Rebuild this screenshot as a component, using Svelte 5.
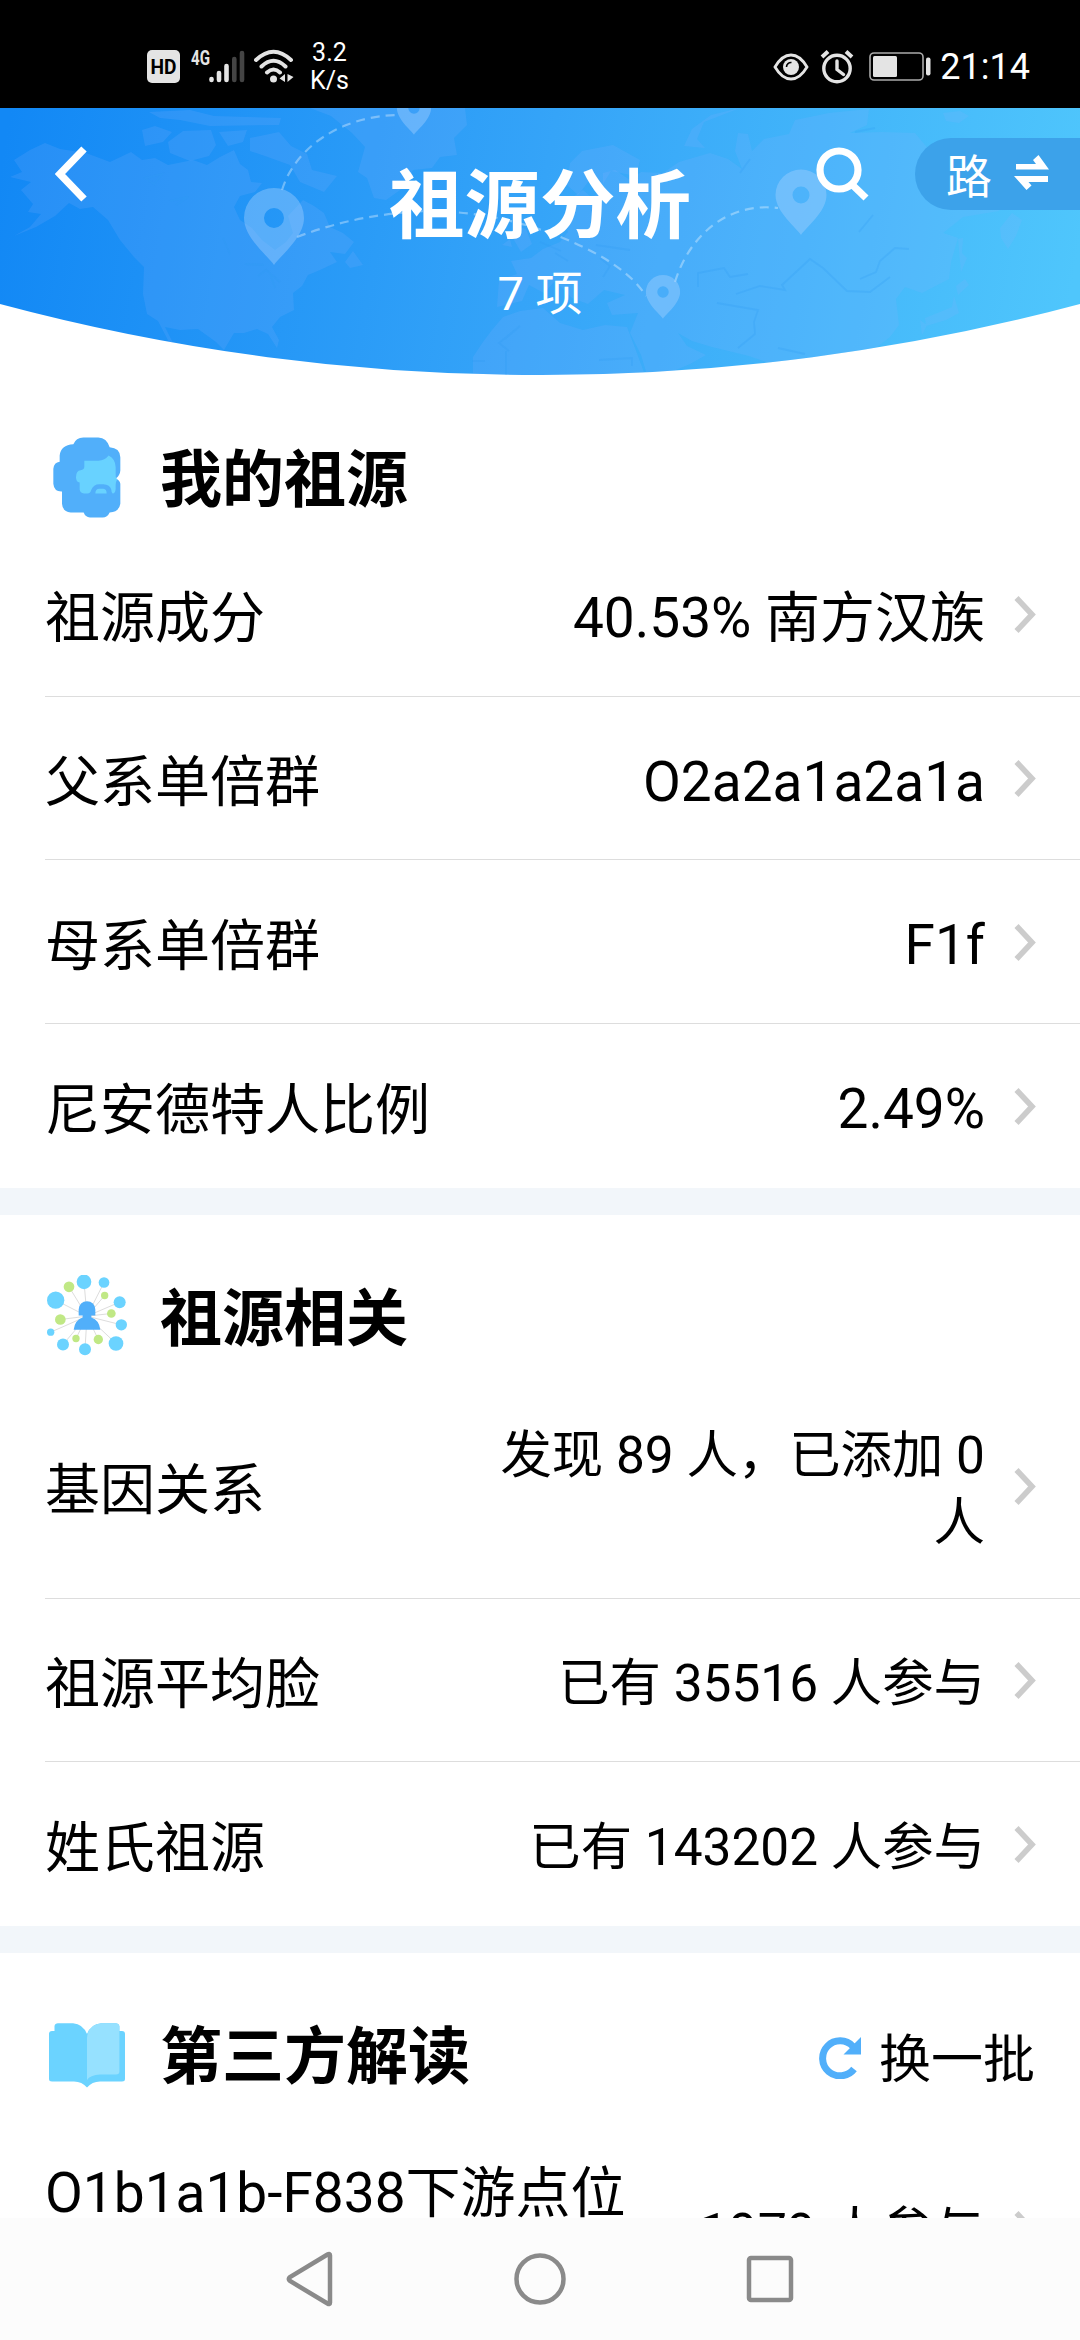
<script lang="ts">
	type Row = { label: string; value: string; size?: 'medium' | 'large'; tall?: boolean };
	type Section = { title: string; icon: 'ancestor' | 'network' | 'book'; refresh?: boolean; rows: Row[] };

	const sections: Section[] = [
		{
			title: '我的祖源',
			icon: 'ancestor',
			rows: [
				{ label: '祖源成分', value: '40.53% 南方汉族', size: 'large' },
				{ label: '父系单倍群', value: 'O2a2a1a2a1a', size: 'large' },
				{ label: '母系单倍群', value: 'F1f', size: 'large' },
				{ label: '尼安德特人比例', value: '2.49%', size: 'large' }
			]
		},
		{
			title: '祖源相关',
			icon: 'network',
			rows: [
				{ label: '基因关系', value: '发现 89 人，已添加 0 人' },
				{ label: '祖源平均脸', value: '已有 35516 人参与' },
				{ label: '姓氏祖源', value: '已有 143202 人参与' }
			]
		},
		{
			title: '第三方解读',
			icon: 'book',
			refresh: true,
			rows: [{ label: 'O1b1a1b-F838下游点位', value: '1979 人参与', size: 'medium', tall: true }]
		}
	];

	// x, y, scale
	const pins = [
		[274, 110, 1],
		[414, 0, 0.57],
		[801, 87, 0.85],
		[663, 184, 0.57]
	];

	// x, y, radius, around the person at 171,170
	const blueDots = [
		[162, 67, 22], [222, 69, 16], [77, 122, 26], [269, 128, 18], [274, 196, 17],
		[62, 218, 11], [99, 255, 18], [165, 269, 18], [258, 252, 22]
	];
	const greenDots = [
		[117, 82, 16], [224, 108, 11], [244, 162, 13], [91, 180, 16], [138, 237, 11], [205, 240, 14]
	];
</script>

<div class="screen">
	<div class="status">
		<div class="status-left">
			<svg class="hd" width="33" height="33" viewBox="0 0 33 33">
				<rect width="33" height="33" rx="5" fill="#e4e4e4" />
				<text x="16.5" y="24" text-anchor="middle" font-size="20" font-weight="700" textLength="26" lengthAdjust="spacingAndGlyphs">HD</text>
			</svg>
			<svg class="signal" width="54" height="35" viewBox="0 0 54 35">
				<text x="0" y="16" font-size="20" font-weight="700" fill="#e4e4e4" textLength="19" lengthAdjust="spacingAndGlyphs">4G</text>
				<g stroke-width="4.6" stroke-linecap="round" stroke="#e4e4e4">
					<path d="M20.5 30v1M28 24v7M35.5 17v14" />
					<path d="M43.3 10v21M51 4v27" stroke="#444" />
				</g>
			</svg>
			<svg class="wifi" width="40" height="35" viewBox="0 0 40 35">
				<g fill="none" stroke="#e4e4e4" stroke-width="4" stroke-linecap="round">
					<path d="M2 11Q19.5 -5.5 37 11M7.5 17.5Q19.5 6 31.500 17.500M13 23.500Q19.500 17.500 26 23.500" />
				</g>
				<circle cx="19.5" cy="30" r="3.5" fill="#e4e4e4" />
				<path d="M25.500 29.500 31 25v8zM33.500 25v8l6-5z" fill="#e4e4e4" />
			</svg>
			<div class="speed">3.2<br />K/s</div>
		</div>
		<div class="status-right">
			<svg width="36" height="28" viewBox="0 0 36 28">
				<path d="M2 14Q9 2 18 2T34 14Q27 26 18 26T2 14Z" fill="none" stroke="#e4e4e4" stroke-width="2.8" />
				<circle cx="18" cy="14" r="8" fill="#e4e4e4" />
				<path d="M13.5 14a4.500 4.500 0 0 1 5-4.500" fill="none" stroke="#000" stroke-width="1.6" />
			</svg>
			<svg class="alarm" width="34" height="34" viewBox="0 0 34 34">
				<g fill="none" stroke="#e4e4e4" stroke-width="3.4">
					<circle cx="17" cy="18.5" r="13.2" />
					<path d="M17 11v8.500l6.500 5" stroke-linecap="round" />
					<path d="M2 7l6-5.500M32 7l-6-5.500" stroke-width="4" />
				</g>
			</svg>
			<svg class="battery" width="62" height="29" viewBox="0 0 62 29">
				<rect x="1" y="1" width="53" height="27" rx="4" fill="none" stroke="#aaa" stroke-width="1.6" />
				<rect x="4" y="4" width="24" height="21" rx="1.5" fill="#e4e4e4" />
				<rect x="57" y="5.5" width="4.5" height="18" rx="2" fill="#e4e4e4" />
			</svg>
			<span class="time">21:14</span>
		</div>
	</div>

	<header>
		<svg class="map" width="1080" height="267" viewBox="0 0 1080 267">
			<defs>
				<linearGradient id="sky" gradientUnits="userSpaceOnUse" x1="0" y1="60" x2="1060" y2="250">
					<stop offset="0" stop-color="#1288f5" />
					<stop offset="0.5" stop-color="#35a4f8" />
					<stop offset="1" stop-color="#4fc6fc" />
				</linearGradient>
				<clipPath id="dome"><path d="M0 0H1080V196A2089 2089 0 0 1 0 196Z" /></clipPath>
			</defs>
			<g clip-path="url(#dome)">
				<rect width="1080" height="267" fill="url(#sky)" />
				<g fill="#8ab4ff" fill-opacity="0.17">
					<path d="M10 69 22 64 14 52 30 42 45 35 60 41 86 45 110 54 131 44 142 52 155 50 168 57 193 52 207 57 220 49 234 42 240 56 248 62 251 74 262 75 255 84 240 88 234 99 240 112 252 120 262 132 275 142 286 134 293 125 288 108 303 92 314 98 324 105 330 119 343 125 354 134 345 146 330 144 337 154 320 162 308 167 302 178 293 185 294 202 280 209 272 219 279 232 277 240 268 226 257 221 244 225 234 225 224 242 216 234 198 221 180 222 165 219 173 235 184 244 170 236 158 213 147 206 143 186 144 159 134 149 120 132 108 112 93 99 80 101 69 95 55 108 36 119 14 128 30 119 41 106 28 104 33 96 21 82 31 74Z" />
					<path d="M142 22 155 18 172 24 163 34 145 38ZM149 4 190 2 214 8 281 10 279 17 210 18 180 12 160 10ZM168 34 183 23 211 22 216 37 209 48 190 53 170 45ZM219 24 247 22 243 34 228 38ZM250 30 279 24 291 38 307 46 312 62 337 68 324 84 300 74 290 57 265 48 250 43ZM345 154 353 143 363 157 350 160Z" />
					<path d="M310 0H465L467 17 454 30 457 47 440 49 432 60 413 62 403 80 386 92 374 90 367 70 358 64 365 39 352 25 331 8Z" />
					<path d="M503 209 520 203 543 200 560 215 583 222 605 217 627 219 635 240 645 267H473L473 249 483 234 492 222Z" />
					<path d="M497 199 499 172 517 166 511 153 531 150 543 141 560 134 568 124 563 111 570 91 583 82 592 90 603 80 603 65 615 62 630 72 641 64 663 65 679 54 710 45 728 51 742 61 735 43 738 25 748 26 752 43 764 31 789 26 795 12 829 5 869 1 867 17 850 25 882 24 915 25 930 43 960 54 998 70 999 103 963 109 943 125 958 130 951 154 949 171 922 185 905 179 896 191 899 217 890 229 877 239 857 246 827 251 781 259 749 248 712 239 692 233 678 225 687 238 706 247 690 256 664 267H647L641 247 630 225 638 205 612 207 607 195 625 187 604 182 588 196 572 190 555 173 544 185 529 177 522 193Z" />
					<path d="M570 55 582 43 613 37 640 52 636 68 611 63 600 81 592 69 578 87 567 77ZM684 38 692 21 711 7 740 0 704 14 697 31 705 40ZM514 132 519 119 526 121 532 136 521 144ZM502 137 510 131 512 139ZM1000 120 1012 105 1022 112 1016 128 1008 141 1001 130ZM943 5 960 3 969 8 959 15 946 13ZM958 131 963 130 962 145 967 150 961 164ZM956 178 965 171 969 177 958 187ZM954 188 959 205 946 212 926 218 925 210 940 204 952 199ZM920 212 927 217 922 227Z" />
				</g>
				<g fill="none" stroke="#2c9cf3" stroke-opacity="0.24" stroke-width="1.8">
					<path d="M145 70 162 66 154 76ZM170 93 188 89 176 97M223 130 230 146M245 156 264 157M258 168 266 162 280 174M270 165 275 180M505 231 520 218 499 235 509 243M506 243V267M472 253H485M555 145 568 153M540 134 561 143M596 137 630 142M600 150 610 158 603 169M698 179V165L724 160 730 169 748 166M736 186 760 178 785 182 782 177 810 151 823 160 847 183 870 184 890 169M860 171 876 164 880 153 895 140 909 141M599 252 632 250 632 258M738 240 755 226 754 214 758 202 717 195M778 240 805 246M825 248 822 258M740 65 750 51M875 20 855 24M859 124 873 107" />
				</g>
				<g fill="none" stroke="#fff" stroke-opacity="0.34" stroke-width="2.2" stroke-dasharray="9 6">
					<path d="M282 82C295 40 340 8 398 7M297 129Q360 105 430 103 500 104 563 130T646 188M675 174C690 125 730 94 778 100" />
				</g>
				{#each pins as [x, y, scale]}
					<g transform="translate({x} {y}) scale({scale})">
						<path d="M0 47C-5 39-30 20-30 0A30 30 0 1 1 30 0C30 20 5 39 0 47ZM0-10A10 10 0 1 0 0 10 10 10 0 1 0 0-10Z" fill="#a8d2ff" fill-opacity="0.4" fill-rule="evenodd" />
					</g>
				{/each}
			</g>
		</svg>

		<svg class="back" width="32" height="56" viewBox="0 0 32 56">
			<path d="M29 3 5 28l24 25" fill="none" stroke="#fff" stroke-width="7.5" />
		</svg>
		<div class="heading">
			<h1>祖源分析</h1>
			<p>7 项</p>
		</div>
		<div class="tools">
			<svg width="54" height="54" viewBox="0 0 54 54">
				<g fill="none" stroke="#fff" stroke-width="7.2">
					<circle cx="23" cy="23" r="19" />
					<path d="M36.500 38 50 51" />
				</g>
			</svg>
			<button class="switch">
				<span>路</span>
				<svg width="36" height="36" viewBox="0 0 36 36" fill="#fff">
					<path d="M2 9h20l-3-4 5.500-5L35 14.500H2zM34 21v6H14.500l3 3.500-5 4.500L0 21z" />
				</svg>
			</button>
		</div>
	</header>

	<main>
		{#each sections as section}
			<section>
				<div class="section-title">
					<svg class="section-icon" width="83" height="83" viewBox={section.icon === 'ancestor' ? '45 49.5 249 249' : section.icon === 'network' ? '45 46.5 249 249' : '0 0 83 83'}>
						{#if section.icon === 'ancestor'}
							<path d="M160 51H205Q230 52 239 80 270 82 271 110V150Q270 165 257 174 270 180 271 190V250Q268 274 239 276 232 291 218 291H180Q166 290 161 276H122Q97 273 96 250V213Q72 214 70 190V145Q72 126 89 124V105Q92 73 130 71 138 52 160 51Z" fill="#51affa" />
							<path d="M163 121H205Q225 119 236 105 256 115 257 140V160Q255 168 262 178 256 181 257 205 256 219 248 219 244 218 244 208 240 192 220 191H208Q190 191 184 208 182 219 172 219H162Q150 218 149 207V186Q138 184 138 170 138 150 152 149 163 148 163 138ZM196 219Q196 205 208 205H220Q230 206 230 219Z" fill="#68d2ff" />
						{:else if section.icon === 'network'}
							<g stroke="#ddd" stroke-width="3">
								{#each [...blueDots, ...greenDots] as [x, y]}
									<line x1="171" y1="170" x2={x} y2={y} />
								{/each}
							</g>
							<g fill="#6bd3ff">
								{#each blueDots as [x, y, r]}
									<circle cx={x} cy={y} {r} />
								{/each}
							</g>
							<g fill="#c0e885">
								{#each greenDots as [x, y, r]}
									<circle cx={x} cy={y} {r} />
								{/each}
							</g>
							<path d="M146 168V150A25 25 0 0 1 196 150V168H184V174Q208 182 211 211H131Q134 182 158 174V168Z" fill="#51affa" />
						{:else}
							<path d="M9.500 17V12Q10 9.200 13 9.200H28Q38 10 42 20 46 10 56 9.200H71Q74 9.500 74.400 12V17H77Q80 17 80 20V65Q80 67.500 77 67.500H55Q47 67.500 42 73.500 37 67.500 29 67.500H7Q4 67.500 4 65V20Q4 17 7 17Z" fill="#6bd3ff" />
							<path d="M42 66V24Q43 10 57 9.200H71Q74 9.500 74.400 12V58Q74 60.500 71 60.500H55Q45 61 42 66Z" fill="#96e1ff" />
						{/if}
					</svg>
					<h2>{section.title}</h2>
					{#if section.refresh}
						<button class="refresh">
							<svg width="42" height="42" viewBox="0 0 42 42">
								<path d="M34 9.500A17.500 17.500 0 1 0 35 32" fill="none" stroke="#51affa" stroke-width="7" />
								<path d="M42 0V17.500H24.500Z" fill="#51affa" />
							</svg>
							<span>换一批</span>
						</button>
					{/if}
				</div>
				{#each section.rows as row}
					<div class="row" class:tall={row.tall}>
						<span class="label">{row.label}</span>
						<span class="value {row.size ?? ''}">{row.value}</span>
						<svg class="arrow" width="22" height="37" viewBox="0 0 22 37">
							<path d="M2.500 2 18 18.500 2.500 35" fill="none" stroke="#ccc" stroke-width="5.6" />
						</svg>
					</div>
				{/each}
			</section>
		{/each}
	</main>

	<nav>
		<svg width="52" height="56" viewBox="0 0 52 56">
			<path d="M46 4.500V51.500Q46 54 43.500 52.500L6 30Q3.500 28 6 26L43.500 3.500Q46 2 46 4.500Z" />
		</svg>
		<svg width="52" height="56" viewBox="0 0 52 56"><circle cx="26" cy="28" r="23.5" /></svg>
		<svg width="52" height="56" viewBox="0 0 52 56"><rect x="5" y="7" width="42" height="42" rx="2" /></svg>
	</nav>
</div>

<style>
	:global(body) {
		background: #fff;
	}

	.screen {
		width: 1080px;
		height: 2340px;
		display: flex;
		flex-direction: column;
		overflow: hidden;
		background: #fff;
		color: #000;
		font-family: Roboto, 'Noto Sans CJK SC', sans-serif;
	}

	svg {
		display: block;
		flex: none;
	}

	.signal {
		overflow: visible;
	}

	.status {
		height: 108px;
		flex: none;
		box-sizing: border-box;
		display: flex;
		justify-content: space-between;
		align-items: center;
		padding: 25px 50px 0 147px;
		background: #000;
		color: #fff;
	}

	.status-left,
	.status-right {
		display: flex;
		align-items: center;
	}

	.signal {
		margin-left: 11px;
	}

	.wifi {
		margin-left: 9px;
	}

	.speed {
		margin-left: 16px;
		font-size: 25px;
		line-height: 28px;
		text-align: center;
	}

	.alarm {
		margin-left: 11px;
	}

	.battery {
		margin-left: 15px;
	}

	.time {
		margin-left: 9px;
		font-size: 36px;
		line-height: 40px;
	}

	header {
		position: relative;
		flex: none;
		height: 267px;
		display: grid;
		grid-template-columns: 1fr auto 1fr;
		align-items: start;
		color: #fff;
	}

	.map {
		position: absolute;
		top: 0;
		left: 0;
	}

	.back,
	.heading,
	.tools {
		position: relative;
	}

	.back {
		margin: 38px 0 0 55px;
	}

	.heading {
		text-align: center;
	}

	h1 {
		margin: 48px 0 0;
		font-size: 75.5px;
		line-height: 100px;
		font-weight: 700;
	}

	p {
		margin: 8px 0 0;
		font-size: 47px;
		line-height: 60px;
	}

	button {
		border: none;
		background: none;
		padding: 0;
		font: inherit;
		color: inherit;
	}

	.tools {
		display: flex;
		align-items: center;
		justify-content: flex-end;
		gap: 45px;
		margin-top: 30px;
	}

	.switch {
		display: flex;
		align-items: center;
		gap: 22px;
		box-sizing: border-box;
		width: 165px;
		height: 72px;
		padding: 0 0 2px 31px;
		border-radius: 36px 0 0 36px;
		background: #3ca2ea;
		font-size: 46px;
	}

	main {
		flex: 1;
		min-height: 0;
		overflow: hidden;
	}

	section + section {
		border-top: 27px solid #f2f6fa;
	}

	.section-title {
		display: flex;
		align-items: center;
		box-sizing: border-box;
		height: 159px;
		padding: 45px 45px 0 45px;
	}

	section:first-child .section-title {
		height: 158px;
		padding-top: 48px;
	}

	h2 {
		margin: 0 auto 0 32px;
		padding-top: 6px;
		font-size: 62px;
		line-height: 80px;
		font-weight: 700;
	}

	.refresh {
		display: flex;
		align-items: center;
		gap: 18px;
		padding-top: 6px;
		font-size: 52px;
		line-height: 70px;
	}

	.refresh span {
		padding-top: 6px;
	}

	.row {
		display: flex;
		align-items: center;
		box-sizing: border-box;
		min-height: 163.7px;
		margin-left: 45px;
		padding: 43px 44px 42px 0;
		border-bottom: 1px solid #ddd;
	}

	.row:last-child {
		border-bottom: none;
	}

	.label {
		flex: none;
		padding-top: 7px;
		font-size: 55px;
		line-height: 70px;
	}

	.value {
		width: 489px;
		margin-left: auto;
		padding-top: 5px;
		font-size: 51.4px;
		line-height: 67px;
		text-align: right;
	}

	.value.medium {
		font-size: 52px;
	}

	.value.large {
		padding-top: 7px;
		font-size: 55px;
	}

	.arrow {
		margin-left: 29px;
	}

	.row.tall {
		height: 234px;
	}

	.row.tall .label {
		align-self: flex-start;
		padding-top: 3px;
	}

	.row.tall .value {
		width: auto;
	}

	nav {
		flex: none;
		height: 122px;
		display: flex;
		justify-content: center;
		align-items: center;
		gap: 178px;
		background: #fcfcfc;
	}

	nav svg {
		fill: none;
		stroke: #8a8a8a;
		stroke-width: 4.5;
	}
</style>
